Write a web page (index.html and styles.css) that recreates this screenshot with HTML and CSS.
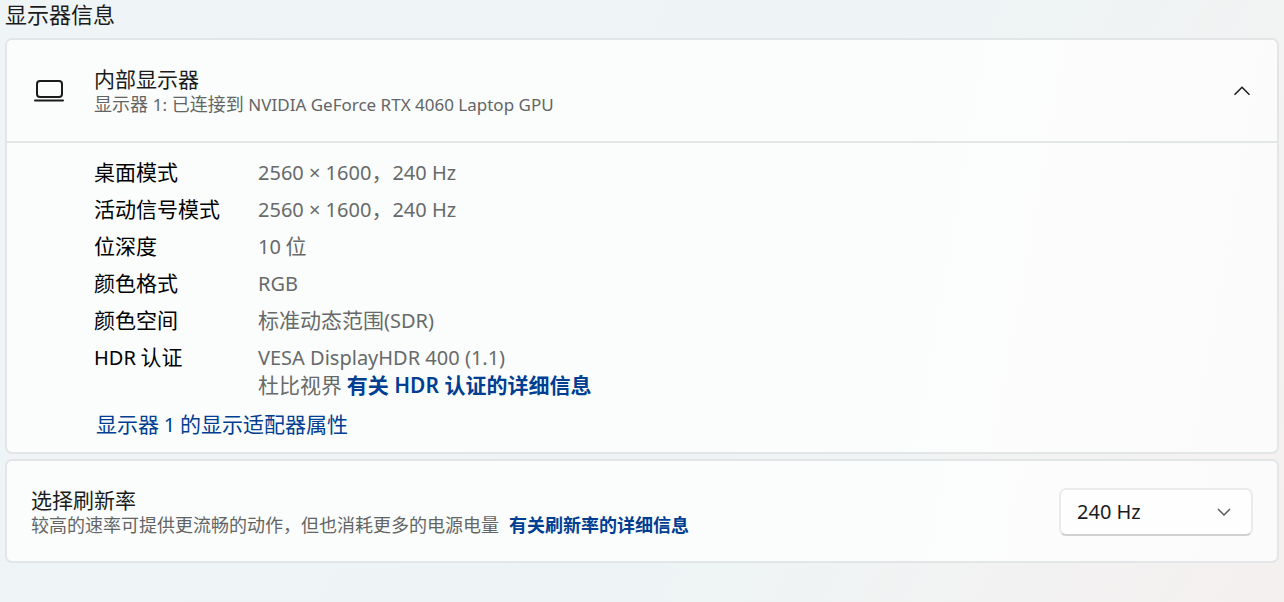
FILE: index.html
```html
<!DOCTYPE html>
<html lang="zh-CN">
<head>
<meta charset="utf-8">
<meta name="viewport" content="width=device-width, initial-scale=1">
<title>显示器信息</title>
<link rel="stylesheet" href="styles.css">
</head>
<body>
<main class="page">
  <h1 class="page-title">显示器信息</h1>
  <section class="card">
    <button class="card-header" type="button" aria-expanded="true" aria-controls="display-details">
      <svg class="laptop-icon" viewBox="0 0 30 24" aria-hidden="true">
        <rect x="3" y="2" width="25" height="16" rx="3"/>
        <path d="M1 21.5H29"/>
      </svg>
      <span class="text-block">
        <span class="title">内部显示器</span>
        <span class="subtitle">显示器 <span class="latin">1:</span> 已连接到 <span class="latin">NVIDIA GeForce RTX 4060 Laptop GPU</span></span>
      </span>
      <svg class="chevron-up" viewBox="0 0 18 10" aria-hidden="true"><path d="M1.5 8.8L9 1.2L16.5 8.8"/></svg>
    </button>
    <div class="card-body" id="display-details">
      <dl class="details">
        <dt>桌面模式</dt>
        <dd><span class="latin">2560 × 1600</span>，<span class="latin">240 Hz</span></dd>
        <dt>活动信号模式</dt>
        <dd><span class="latin">2560 × 1600</span>，<span class="latin">240 Hz</span></dd>
        <dt>位深度</dt>
        <dd><span class="latin">10</span> 位</dd>
        <dt>颜色格式</dt>
        <dd><span class="latin">RGB</span></dd>
        <dt>颜色空间</dt>
        <dd>标准动态范围<span class="latin">(SDR)</span></dd>
        <dt><span class="latin">HDR</span> 认证</dt>
        <dd><span class="latin">VESA DisplayHDR 400 (1.1)</span><br>杜比视界 <a class="link strong" href="#hdr">有关 HDR 认证的详细信息</a></dd>
      </dl>
      <a class="link adapter-link" href="#adapter">显示器 <span class="latin">1</span> 的显示适配器属性</a>
    </div>
  </section>
  <section class="card refresh">
    <div class="text-block">
      <label class="title" for="refresh-rate">选择刷新率</label>
      <p class="subtitle">较高的速率可提供更流畅的动作，但也消耗更多的电源电量<a class="link strong more-link" href="#refresh">有关刷新率的详细信息</a></p>
    </div>
    <div class="select-box">
      <select id="refresh-rate" class="select">
        <option>240 Hz</option>
        <option>60 Hz</option>
      </select>
      <svg class="chevron-down" viewBox="0 0 14 8" aria-hidden="true"><path d="M1 1L7 7L13 1"/></svg>
    </div>
  </section>
</main>
</body>
</html>
```

FILE: styles.css
```css
* {
  box-sizing: border-box;
}

body {
  margin: 0;
  min-height: 100vh;
  background: linear-gradient(120deg, #eff4f6 0%, #eef4f5 60%, #f3f2f2 85%, #f4f0ef 100%);
  color: #1b1b1b;
  font-family: "Noto Sans CJK SC", "Noto Sans", sans-serif;
  font-size: 21px;
  line-height: 28px;
}

.page {
  display: flex;
  flex-direction: column;
  gap: 5px;
  padding: 0 5px 40px;
}

.page-title {
  height: 28px;
  margin: 0 0 5px;
  font-size: 22px;
  font-weight: 400;
  line-height: 28px;
}

.latin {
  font-family: "Noto Sans", sans-serif;
  font-size: 20px;
  line-height: 1;
}

.card {
  border: 2px solid #e2e6e7;
  border-radius: 7px;
  background: linear-gradient(100deg, #fafdfc 0%, #fafdfc 65%, #fcfcfc 80%, #fcfbfb 100%);
}

.card-header {
  display: flex;
  align-items: center;
  width: 100%;
  padding: 25px 26px 25px 27px;
  border: 0;
  border-bottom: 2px solid #e2e6e7;
  background: transparent;
  color: inherit;
  font: inherit;
  text-align: left;
}

.laptop-icon {
  flex: none;
  width: 30px;
  height: 24px;
  margin-right: 30px;
  fill: none;
  stroke: #1b1b1b;
  stroke-width: 2;
  stroke-linecap: round;
}

.text-block {
  display: flex;
  flex: 1;
  flex-direction: column;
}

.page-title,
.title,
.subtitle {
  font-family: "Noto Sans", "Noto Sans CJK SC", sans-serif;
}

.title {
  line-height: 28px;
}

.subtitle {
  margin: 0;
  color: #636565;
  font-size: 18px;
  line-height: 23px;
}

.subtitle .latin {
  font-size: 17px;
}

.chevron-up {
  flex: none;
  width: 18px;
  height: 10px;
  fill: none;
  stroke: #1b1b1b;
  stroke-width: 1.5;
}

.card-body {
  padding: 14px 24px 15px 87px;
}

.details {
  display: grid;
  grid-template-columns: 164px 1fr;
  row-gap: 9px;
  margin: 0 0 11px;
}

.details dt {
  color: #000;
}

.details dd {
  margin: 0;
  color: #686a6a;
}

.link {
  color: #003e92;
  text-decoration: none;
}

.strong {
  font-family: "Noto Sans", "Noto Sans CJK SC", sans-serif;
  font-weight: 600;
  line-height: 1;
}

.adapter-link {
  display: block;
  width: fit-content;
  margin-left: 2px;
}

.refresh {
  display: flex;
  align-items: center;
  gap: 24px;
  padding: 25px 24px 24px;
}

.more-link {
  margin-left: 10px;
}

.select-box {
  display: grid;
  align-items: center;
  width: 194px;
}

.select {
  grid-area: 1 / 1;
  width: 100%;
  height: 48px;
  padding: 0 40px 0 16px;
  appearance: none;
  border: 2px solid #ebebeb;
  border-bottom-color: #d0d0d0;
  border-radius: 7px;
  background: #fefefe;
  color: #1b1b1b;
  font-family: "Noto Sans", "Noto Sans CJK SC", sans-serif;
  font-size: 20px;
}

.chevron-down {
  grid-area: 1 / 1;
  justify-self: end;
  width: 14px;
  height: 8px;
  margin-right: 22px;
  fill: none;
  stroke: #5d5d5d;
  stroke-width: 1.5;
  pointer-events: none;
}
```
